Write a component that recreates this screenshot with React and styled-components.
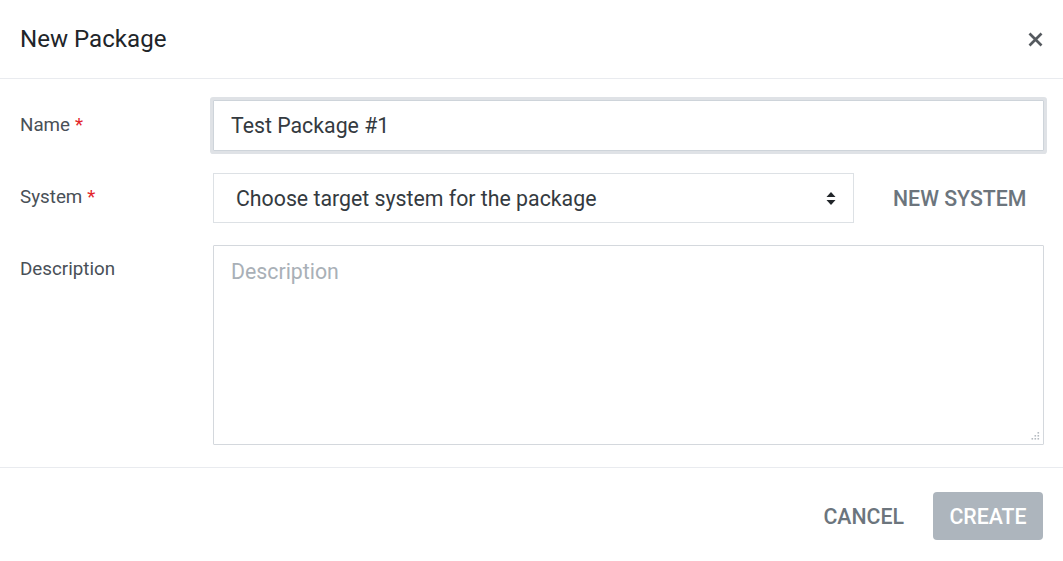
import React from "react";
import styled, { createGlobalStyle } from "styled-components";

const Global = createGlobalStyle`
  html, body { margin: 0; padding: 0; background: #fff; }
  body { font-family: Roboto, "Liberation Sans", Arial, sans-serif; }
  * { box-sizing: border-box; }
`;

const Dialog = styled.div`
  width: 1063px;
  height: 561px;
  background: #fff;
  display: flex;
  flex-direction: column;
`;

const Header = styled.div`
  height: 79px;
  display: flex;
  align-items: center;
  justify-content: space-between;
  padding: 0 20px 0 20px;
  border-bottom: 1px solid #e9ebef;
`;

const Title = styled.h1`
  margin: 0;
  font-size: 24.1px;
  font-weight: 400;
  color: #212529;
  line-height: 1;
`;

const CloseButton = styled.button`
  border: 0;
  background: transparent;
  padding: 0;
  margin-right: 0;
  width: 16px;
  height: 16px;
  display: flex;
  align-items: center;
  justify-content: center;
  cursor: pointer;
`;

const Body = styled.div`
  display: grid;
  grid-template-columns: 193px 1fr;
  row-gap: 22px;
  padding: 21px 19px 22px 20px;
  border-bottom: 1px solid #e9ebef;
`;

const Label = styled.label`
  display: flex;
  align-items: center;
  height: ${(p) => p.$h || 50}px;
  font-size: 18.8px;
  color: #495057;
  font-weight: 400;
  padding-bottom: ${(p) => p.$pb || 0}px;
`;

const Required = styled.span`
  color: #e3262b;
  margin-left: 5px;
`;

const TextInput = styled.input`
  width: 100%;
  height: 51px;
  border: 1px solid #ced4da;
  border-radius: 1px;
  box-shadow: 0 0 0 3px #dfe2e6;
  padding: 0 17px;
  font-family: inherit;
  font-size: 21.3px;
  color: #343a40;
  outline: none;
`;

const SelectRow = styled.div`
  display: flex;
  align-items: center;
`;

const SelectWrap = styled.div`
  position: relative;
  width: 641px;
  height: 50px;
`;

const Select = styled.select`
  appearance: none;
  width: 100%;
  height: 100%;
  border: 1px solid #dde1e5;
  border-radius: 0;
  background: #fff;
  padding: 0 40px 0 22px;
  font-family: inherit;
  font-size: 21.3px;
  color: #343a40;
  outline: none;
`;

const Arrows = styled.svg`
  position: absolute;
  right: 18px;
  top: 19px;
  pointer-events: none;
`;

const TextButton = styled.button`
  border: 0;
  background: transparent;
  font-family: inherit;
  font-size: 21.3px;
  font-weight: 500;
  color: ${(p) => p.$color || "#6c757d"};
  text-transform: uppercase;
  padding: 0;
  cursor: pointer;
`;

const NewSystem = styled(TextButton)`
  margin-left: 39px;
  margin-top: 1px;
`;

const AreaWrap = styled.div`
  position: relative;
  height: 200px;
`;

const TextArea = styled.textarea`
  width: 100%;
  height: 100%;
  border: 1px solid #d4d8dd;
  border-radius: 1px;
  padding: 13px 17px;
  font-family: inherit;
  font-size: 21.3px;
  color: #343a40;
  resize: none;
  outline: none;
  &::placeholder { color: #a9b0b7; }
`;

const Grip = styled.svg`
  position: absolute;
  right: 4px;
  bottom: 4px;
  pointer-events: none;
`;

const Footer = styled.div`
  flex: 1;
  display: flex;
  justify-content: flex-end;
  align-items: center;
  gap: 29px;
  padding: 3px 20px 0 20px;
`;

const PrimaryButton = styled.button`
  height: 48px;
  width: 110px;
  border: 0;
  border-radius: 4px;
  background: #adb5bd;
  color: #fff;
  font-family: inherit;
  font-size: 21.3px;
  font-weight: 500;
  text-transform: uppercase;
  cursor: not-allowed;
`;

export default function App() {
  return (
    <>
      <Global />
      <Dialog>
        <Header>
          <Title>New Package</Title>
          <CloseButton aria-label="Close">
            <svg width="15" height="15" viewBox="0 0 15 15">
              <path d="M1.5 1.5 L13.5 13.5 M13.5 1.5 L1.5 13.5" stroke="#555a5f" strokeWidth="2.7" strokeLinecap="butt" />
            </svg>
          </CloseButton>
        </Header>
        <Body>
          <Label $h={51} $pb={1}>
            Name<Required>*</Required>
          </Label>
          <TextInput defaultValue="Test Package #1" />

          <Label $pb={2}>
            System<Required>*</Required>
          </Label>
          <SelectRow>
            <SelectWrap>
              <Select defaultValue="">
                <option value="">Choose target system for the package</option>
              </Select>
              <Arrows width="10" height="13" viewBox="0 0 10 13">
                <path d="M5 0 L9.5 5 H0.5 Z" fill="#212529" />
                <path d="M5 13 L9.5 8 H0.5 Z" fill="#212529" />
              </Arrows>
            </SelectWrap>
            <NewSystem>New System</NewSystem>
          </SelectRow>

          <Label $pb={2}>Description</Label>
          <AreaWrap>
            <TextArea placeholder="Description" />
            <Grip width="10" height="10" viewBox="0 0 10 10">
              <g fill="#b5bbc1">
                <rect x="7.5" y="1" width="1.6" height="1.6" />
                <rect x="4.5" y="4" width="1.6" height="1.6" />
                <rect x="7.5" y="4" width="1.6" height="1.6" />
                <rect x="1.5" y="7" width="1.6" height="1.6" />
                <rect x="4.5" y="7" width="1.6" height="1.6" />
                <rect x="7.5" y="7" width="1.6" height="1.6" />
              </g>
            </Grip>
          </AreaWrap>
        </Body>
        <Footer>
          <TextButton>Cancel</TextButton>
          <PrimaryButton>Create</PrimaryButton>
        </Footer>
      </Dialog>
    </>
  );
}
